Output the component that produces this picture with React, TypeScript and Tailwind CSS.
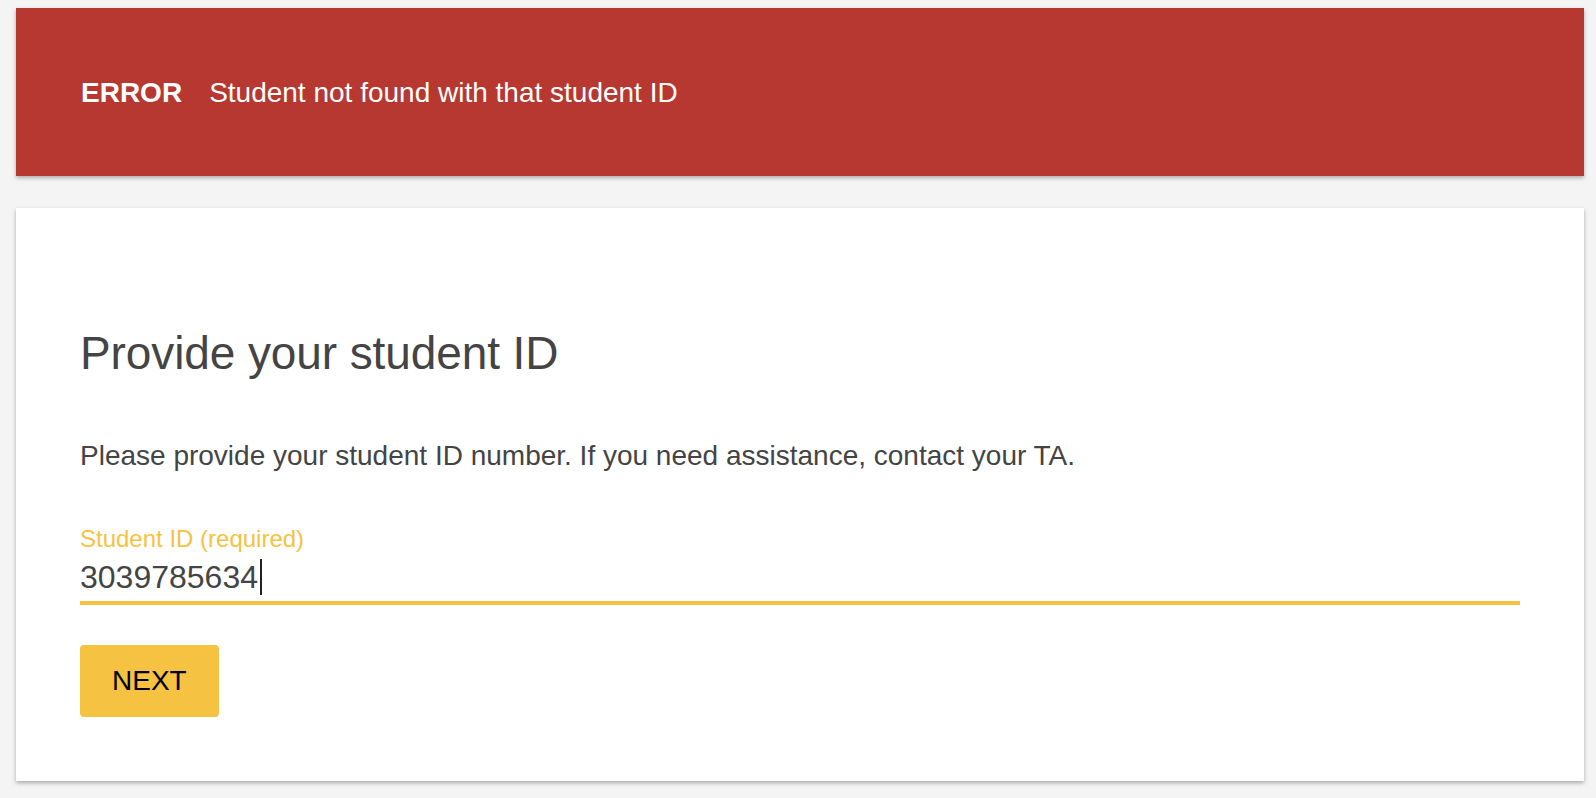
export default function App() {
  const font = { fontFamily: '"Liberation Sans", Arial, Helvetica, sans-serif' };

  return (
    <div
      className="min-h-screen bg-[#f4f4f4] pt-2 pb-4 text-[#444444]"
      style={font}
    >
      {/* Error banner */}
      <div className="ml-4 mr-3 flex h-[168px] items-center bg-[#b73731] px-[65px] pt-[2px] text-white shadow-[0_2px_4px_rgba(0,0,0,0.3)]">
        <span className="text-[28px] font-bold leading-[32px]">ERROR</span>
        <span className="ml-[27px] text-[28px] leading-[32px]">
          Student not found with that student ID
        </span>
      </div>

      {/* Form card */}
      <div className="ml-4 mr-3 mt-8 bg-white px-16 pb-16 pt-[117px] shadow-[0_2px_4px_rgba(0,0,0,0.3)]">
        <h1 className="text-[46px] leading-[56px] tracking-[-0.1px]">
          Provide your student ID
        </h1>

        <p className="mt-[55px] text-[28px] leading-[40px]">
          Please provide your student ID number. If you need assistance,
          contact your TA.
        </p>

        <div className="mt-[49px]">
          <label className="block text-[24px] leading-[28px] text-[#f5c242]">
            Student ID (required)
          </label>
          <div className="mt-[6px] flex items-center border-b-4 border-[#f5c242] pb-[6px] text-[32px] leading-[36px]">
            <span>3039785634</span>
            <span className="ml-[2px] inline-block h-[36px] w-[2px] bg-[#222222]" />
          </div>
        </div>

        <button className="mt-10 h-[72px] rounded-[4px] bg-[#f5c242] px-8 text-[28px] leading-[32px] text-black">
          NEXT
        </button>
      </div>
    </div>
  );
}
